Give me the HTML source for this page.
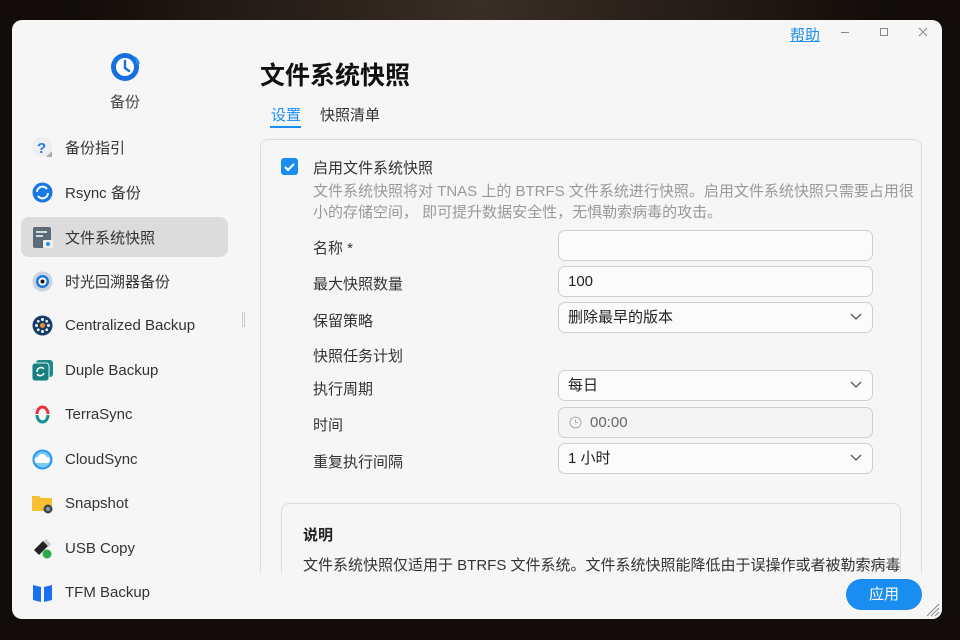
<!DOCTYPE html>
<html><head><meta charset="utf-8"><style>
*{margin:0;padding:0;box-sizing:border-box}
body{width:960px;height:640px;overflow:hidden;background:radial-gradient(ellipse at 50% 0%,#3a2e26,#120d0a 60%),#0e0b09;font-family:"Liberation Sans","Noto Sans CJK SC",sans-serif;position:relative;color:#333}
.win{position:absolute;left:12px;top:20px;width:930px;height:599px;background:#f6f6f6;border-radius:10px;overflow:hidden}
.abs{position:absolute}
.nav{position:absolute;left:9px;width:207px;height:40px;border-radius:8px;font-size:15px;color:#333;display:flex;align-items:center;padding-left:44px}
.nav .ic{position:absolute;left:11px;top:10px;width:21px;height:21px}
.nav.sel{background:#dcdcdc}
.lbl{position:absolute;left:313px;font-size:15px;color:#333}
.inp{position:absolute;left:558px;width:315px;height:31px;border:1px solid #cfcfcf;border-radius:7px;background:#fbfbfb;font-size:15px;padding-left:9px;line-height:29px;color:#222}
.inp svg{position:absolute;right:10px;top:10px}
</style></head><body>
<div class="win">
  <svg class="abs" style="left:97px;top:30px" width="34" height="34" viewBox="0 0 34 34"><circle cx="16" cy="17" r="14" fill="#1670e0"/><path d="M26 6 A14 14 0 0 1 31 14 L27 13 Z" fill="#2a90f0"/><circle cx="16" cy="17" r="9" fill="#fff"/><path d="M16 11v7l4 3" stroke="#1670e0" stroke-width="2.4" fill="none" stroke-linecap="round"/></svg>
  <div class="abs" style="left:98px;top:71px;font-size:15px;color:#444">备份</div>

  <div class="nav" style="top:107px"><svg class="ic" viewBox="0 0 21 21"><circle cx="10" cy="10" r="10" fill="#eee"/><path d="M14 20l6-6v6z" fill="#aaa"/><text x="5" y="16" font-size="15" font-weight="bold" fill="#1a7ee8" font-family="Liberation Sans">?</text></svg>备份指引</div>
  <div class="nav" style="top:152px"><svg class="ic" viewBox="0 0 21 21"><circle cx="10.5" cy="10.5" r="10" fill="#1a78e6"/><path d="M5 10a5.5 5.5 0 0 1 10-3M16 11a5.5 5.5 0 0 1-10 3" stroke="#fff" stroke-width="2" fill="none"/></svg>Rsync 备份</div>
  <div class="nav sel" style="top:197px"><svg class="ic" viewBox="0 0 21 21"><rect x="1" y="0" width="18" height="21" rx="2" fill="#5d6b78"/><rect x="4" y="4" width="11" height="2" fill="#cdd"/><rect x="4" y="8" width="7" height="2" fill="#cdd"/><rect x="11" y="13" width="10" height="8" rx="1" fill="#eee"/><circle cx="16" cy="17" r="2" fill="#2a8de0"/></svg>文件系统快照</div>
  <div class="nav" style="top:241px"><svg class="ic" viewBox="0 0 21 21"><circle cx="10.5" cy="10.5" r="10" fill="#c8d4e0"/><circle cx="10.5" cy="10.5" r="6.5" fill="#1f78d8"/><circle cx="10.5" cy="10.5" r="4" fill="#fff"/><circle cx="10.5" cy="10.5" r="2" fill="#111"/></svg>时光回溯器备份</div>
  <div class="nav" style="top:285px"><svg class="ic" viewBox="0 0 21 21"><circle cx="10.5" cy="10.5" r="10" fill="#143d6a"/><circle cx="10.5" cy="10.5" r="2.5" fill="#f09020"/><g fill="#fff"><circle cx="10.5" cy="4.5" r="1.5"/><circle cx="10.5" cy="16.5" r="1.5"/><circle cx="4.5" cy="10.5" r="1.5"/><circle cx="16.5" cy="10.5" r="1.5"/><circle cx="6.3" cy="6.3" r="1.3"/><circle cx="14.7" cy="14.7" r="1.3"/><circle cx="14.7" cy="6.3" r="1.3"/><circle cx="6.3" cy="14.7" r="1.3"/></g></svg>Centralized Backup</div>
  <div class="nav" style="top:330px"><svg class="ic" viewBox="0 0 21 21"><rect x="4" y="0" width="17" height="17" rx="3" fill="#1c8a8a"/><rect x="0" y="3" width="17" height="18" rx="3" fill="#17807f" stroke="#e0f0f0" stroke-width="1"/><path d="M5 12a4 4 0 0 1 7-3M12 13a4 4 0 0 1-7 1" stroke="#fff" stroke-width="1.5" fill="none"/></svg>Duple Backup</div>
  <div class="nav" style="top:374px"><svg class="ic" viewBox="0 0 21 21"><path d="M5 10a5.5 7 0 0 1 11 0" stroke="#e83040" stroke-width="3" fill="none"/><path d="M16 11a5.5 7 0 0 1-11 0" stroke="#1a9090" stroke-width="3" fill="none"/></svg>TerraSync</div>
  <div class="nav" style="top:419px"><svg class="ic" viewBox="0 0 21 21"><circle cx="10.5" cy="10.5" r="10" fill="#2898f0"/><circle cx="10.5" cy="10.5" r="8" fill="#7cc8f8"/><path d="M5 14a3 3 0 0 1 1-6 4.5 4.5 0 0 1 8.5 0 3 3 0 0 1 1 6z" fill="#fff"/></svg>CloudSync</div>
  <div class="nav" style="top:463px"><svg class="ic" viewBox="0 0 21 21"><path d="M0 3h7l2 2h11v13H0z" fill="#f7c030"/><circle cx="16" cy="16" r="4.5" fill="#445"/><circle cx="16" cy="16" r="2" fill="#89a"/></svg>Snapshot</div>
  <div class="nav" style="top:508px"><svg class="ic" viewBox="0 0 21 21"><path d="M2 12l9-9 5 5-9 9z" fill="#222"/><path d="M11 3l3-2 5 5-2 3z" fill="#ccc"/><circle cx="15" cy="16" r="4.5" fill="#2cab4a"/></svg>USB Copy</div>
  <div class="nav" style="top:552px"><svg class="ic" viewBox="0 0 21 21"><path d="M1 3l8 2v15l-8-2zM20 3l-8 2v15l8-2z" fill="#1a6ef0"/></svg>TFM Backup</div>

  <div class="abs" style="left:230px;top:292px;width:3px;height:15px;border-left:1px solid #ccc;border-right:1px solid #ccc"></div>

  <div class="abs" style="left:778px;top:4px;font-size:15px;color:#1a8ef0;text-decoration:underline">帮助</div>
  <div class="abs" style="left:829px;top:12px;width:8px;height:1px;background:#888"></div>
  <div class="abs" style="left:868px;top:8px;width:8px;height:8px;border:1px solid #888"></div>
  <svg class="abs" style="left:906px;top:7px" width="10" height="10"><path d="M1 1l8 8M9 1l-8 8" stroke="#888"/></svg>

  <div class="abs" style="left:248px;top:36px;font-size:25px;font-weight:bold;color:#111">文件系统快照</div>
  <div class="abs" style="left:259px;top:84px;font-size:15px;color:#1a8ef0">设置</div>
  <div class="abs" style="left:258px;top:106px;width:31px;height:2px;background:#1a8ef0"></div>
  <div class="abs" style="left:308px;top:84px;font-size:15px;color:#333">快照清单</div>
</div>

<div class="abs" style="left:260px;top:139px;width:662px;height:450px;border:1px solid #ddd;border-radius:8px;background:#f6f6f6"></div>
<div class="abs" style="left:281px;top:158px;width:17px;height:17px;border-radius:3px;background:#1a8ef0"><svg width="17" height="17"><path d="M4 9l3 3 6-6" stroke="#fff" stroke-width="2" fill="none"/></svg></div>
<div class="lbl" style="top:157px">启用文件系统快照</div>
<div class="abs" style="left:313px;top:181px;width:602px;font-size:15px;line-height:21px;color:#999">文件系统快照将对 TNAS 上的 BTRFS 文件系统进行快照。启用文件系统快照只需要占用很小的存储空间， 即可提升数据安全性，无惧勒索病毒的攻击。</div>
<div class="lbl" style="top:237px">名称 *</div><div class="inp" style="top:230px"></div>
<div class="lbl" style="top:273px">最大快照数量</div><div class="inp" style="top:266px">100</div>
<div class="lbl" style="top:310px">保留策略</div><div class="inp" style="top:302px">删除最早的版本<svg width="12" height="8"><path d="M1 1l5 5 5-5" stroke="#555" fill="none" stroke-width="1.3"/></svg></div>
<div class="lbl" style="top:345px">快照任务计划</div>
<div class="lbl" style="top:378px">执行周期</div><div class="inp" style="top:370px">每日<svg width="12" height="8"><path d="M1 1l5 5 5-5" stroke="#555" fill="none" stroke-width="1.3"/></svg></div>
<div class="lbl" style="top:414px">时间</div><div class="inp" style="top:407px;background:#f4f4f4;color:#666;padding-left:31px"><svg style="left:10px;top:8px" width="13" height="13"><circle cx="6.5" cy="6.5" r="5.5" stroke="#aab" fill="none"/><path d="M6.5 3.5v3h2.5" stroke="#aab" fill="none"/></svg>00:00</div>
<div class="lbl" style="top:451px">重复执行间隔</div><div class="inp" style="top:443px">1 小时<svg width="12" height="8"><path d="M1 1l5 5 5-5" stroke="#555" fill="none" stroke-width="1.3"/></svg></div>

<div class="abs" style="left:281px;top:503px;width:620px;height:90px;border:1px solid #ddd;border-radius:8px;background:#f6f6f6"></div>
<div class="abs" style="left:303px;top:524px;font-size:15px;font-weight:bold;color:#222">说明</div>
<div class="abs" style="left:303px;top:554px;font-size:15px;color:#333;white-space:nowrap">文件系统快照仅适用于 BTRFS 文件系统。文件系统快照能降低由于误操作或者被勒索病毒</div>
<div class="abs" style="left:248px;top:573px;width:694px;height:46px;background:#f6f6f6;border-radius:0 0 10px 0"></div>
<div class="abs" style="left:846px;top:579px;width:76px;height:31px;border-radius:16px;background:#1a8ef0;color:#fff;font-size:15px;text-align:center;line-height:31px">应用</div>
<svg class="abs" style="left:926px;top:603px" width="14" height="14"><path d="M13 1L1 13M13 5L5 13M13 9L9 13" stroke="#888"/></svg>
</body></html>
